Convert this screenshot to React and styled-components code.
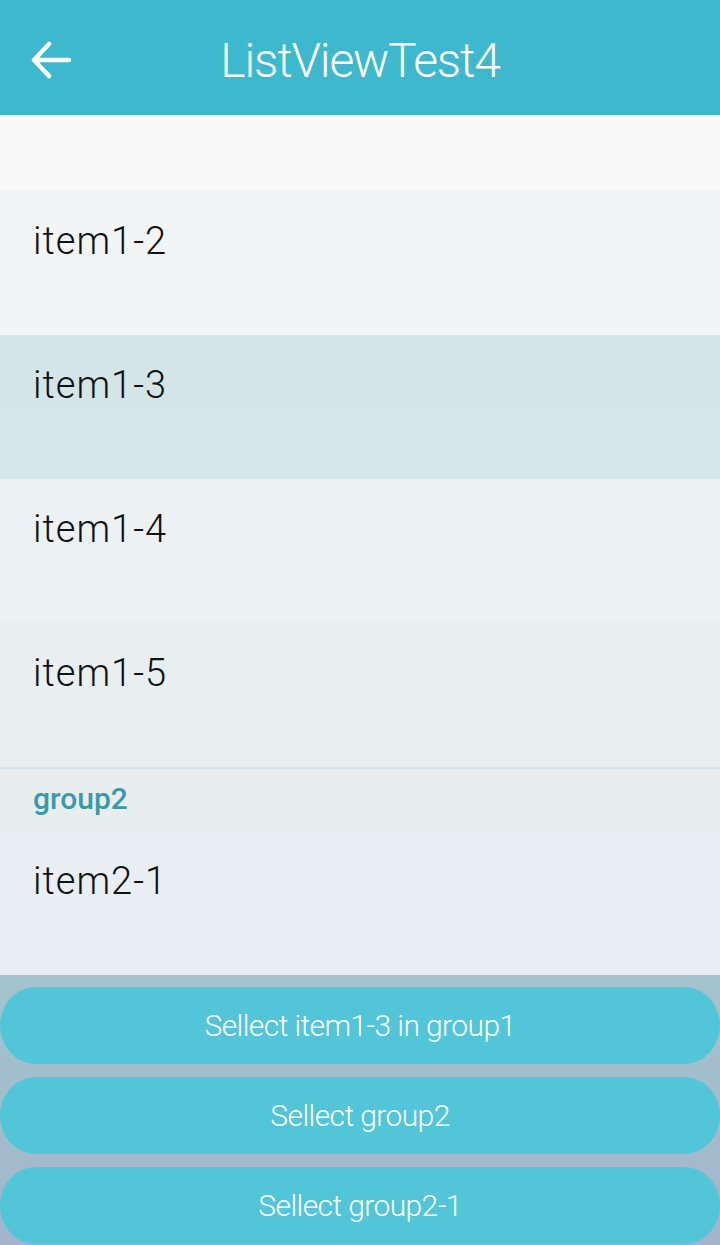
import React from "react";
import styled, { createGlobalStyle } from "styled-components";

const Global = createGlobalStyle`
  html, body { margin: 0; padding: 0; }
  body { font-family: Roboto, "Noto Sans", sans-serif; background: #f9f9f9; }
  * { box-sizing: border-box; }
`;

const Page = styled.div`
  width: 720px;
  height: 1245px;
  display: flex;
  flex-direction: column;
  overflow: hidden;
`;

const Header = styled.header`
  height: 115px;
  flex: none;
  background: #3db8cc;
  display: grid;
  grid-template-columns: 100px 1fr 100px;
  align-items: center;
  padding-top: 4px;
`;

const BackButton = styled.button`
  border: 0;
  background: none;
  padding: 0 0 0 30px;
  height: 100%;
  display: flex;
  align-items: center;
  cursor: pointer;
`;

const Title = styled.h1`
  margin: 0;
  text-align: center;
  color: #fff;
  font-family: Roboto, sans-serif;
  font-weight: 300;
  font-size: 48px;
  letter-spacing: -1.2px;
  line-height: 1;
  padding-top: 2px;
`;

const List = styled.div`
  flex: 1;
  display: flex;
  flex-direction: column;
  overflow: hidden;
`;

const Spacer = styled.div`
  height: 76px;
  flex: none;
  background: #f9f9f9;
`;

const Item = styled.div`
  height: 144px;
  flex: none;
  padding: 31px 0 0 33px;
  background: ${(p) => p.$bg};
  font-family: Roboto, sans-serif;
  font-weight: 300;
  font-size: 38px;
  line-height: 38px;
  letter-spacing: 1px;
  color: #111;
`;

const Divider = styled.div`
  height: 2px;
  flex: none;
  background: #cfe4e9;
`;

const GroupHeader = styled.div`
  height: 62px;
  flex: none;
  padding: 16px 0 0 33px;
  background: #e8eef0;
  color: #3a9aaa;
  font-family: Roboto, sans-serif;
  font-weight: 500;
  font-size: 30px;
  line-height: 28px;
`;

const Actions = styled.div`
  height: 270px;
  flex: none;
  background: linear-gradient(#a3c4cc, #a3b4cc);
  display: flex;
  flex-direction: column;
  gap: 13px;
  padding: 12px 0 1px;
`;

const ActionButton = styled.button`
  height: 77px;
  flex: none;
  width: 100%;
  border: 0;
  border-radius: 36px / 39px;
  background: #52c6d8;
  color: #fff;
  font-family: Roboto, sans-serif;
  font-weight: 300;
  font-size: 30px;
  letter-spacing: -0.6px;
  cursor: pointer;
`;

const items = [
  { label: "item1-2", bg: "#f2f5f6" },
  { label: "item1-3", bg: "linear-gradient(#d3e5e8, #d6e6e8)" },
  { label: "item1-4", bg: "#ecf2f3" },
  { label: "item1-5", bg: "#e9eff1" },
];

export default function App() {
  return (
    <Page>
      <Global />
      <Header>
        <BackButton aria-label="Back">
          <svg width="42" height="38" viewBox="0 0 42 38" fill="none">
            <path
              d="M19 3 L4 19 L19 35 M4 19 H39"
              stroke="#fff"
              strokeWidth="4.5"
              strokeLinecap="round"
              strokeLinejoin="round"
            />
          </svg>
        </BackButton>
        <Title>ListViewTest4</Title>
        <div />
      </Header>
      <List>
        <Spacer />
        {items.map((it) => (
          <Item key={it.label} $bg={it.bg}>
            {it.label}
          </Item>
        ))}
        <Divider />
        <GroupHeader>group2</GroupHeader>
        <Item $bg="#e8eef1">item2-1</Item>
      </List>
      <Actions>
        <ActionButton>Sellect item1-3 in group1</ActionButton>
        <ActionButton>Sellect group2</ActionButton>
        <ActionButton>Sellect group2-1</ActionButton>
      </Actions>
    </Page>
  );
}
